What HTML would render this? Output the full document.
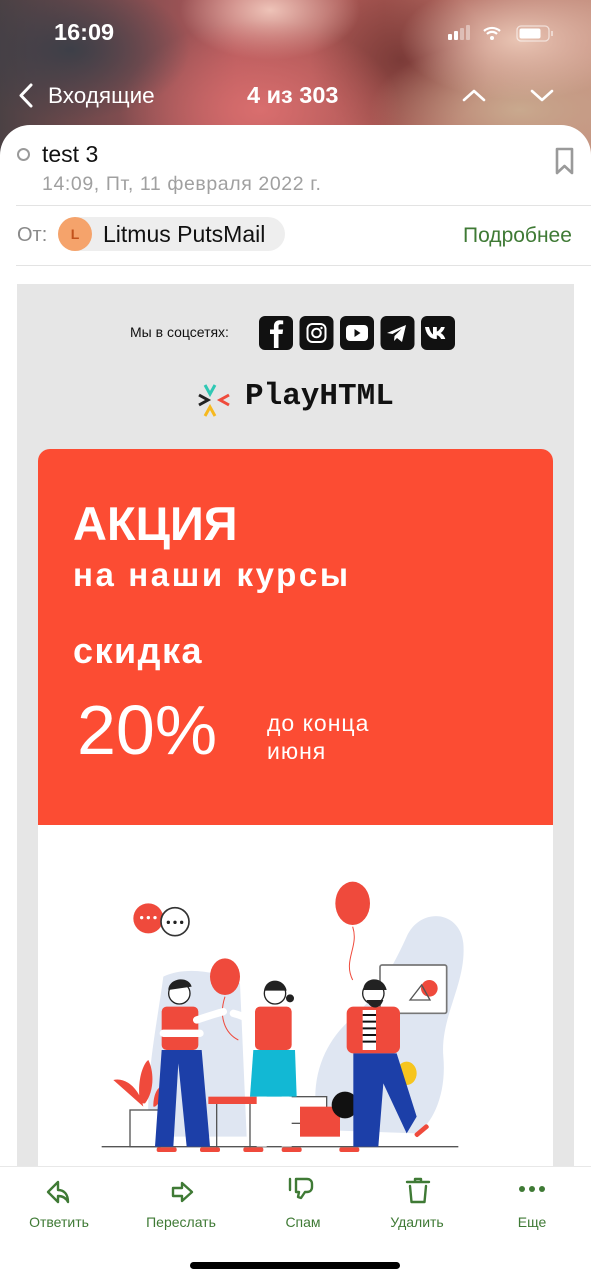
<!DOCTYPE html>
<html><head><meta charset="utf-8"><style>
*{margin:0;padding:0;box-sizing:border-box}
body{width:591px;height:1280px;position:relative;overflow:hidden;font-family:"Liberation Sans","DejaVu Sans",sans-serif;background:#fff}
.a{position:absolute;white-space:nowrap}
.bg{left:0;top:0;width:591px;height:160px;background:
radial-gradient(ellipse 120px 70px at 70px 50px,#3d3f48 0%,rgba(61,63,72,0) 100%),
radial-gradient(ellipse 140px 90px at 260px 110px,#d96e6e 0%,rgba(217,110,110,0) 100%),
radial-gradient(ellipse 90px 50px at 270px 10px,#eec3b8 0%,rgba(238,195,184,0) 100%),
radial-gradient(ellipse 120px 60px at 520px 40px,#e9c5b4 0%,rgba(233,197,180,0) 100%),
radial-gradient(ellipse 150px 70px at 520px 110px,#c9a98e 0%,rgba(201,169,142,0) 100%),
radial-gradient(ellipse 90px 80px at 400px 60px,#7b3b38 0%,rgba(123,59,56,0) 100%),
linear-gradient(90deg,#4b4144,#b2585a 40%,#a65651 65%,#c38d7d)}
.card{left:0;top:125px;width:591px;height:1155px;background:#fff;border-radius:30px 30px 0 0}
.w{color:#fff}
.ic{fill:none;stroke:#3f7a35;stroke-width:2.4;stroke-linecap:round;stroke-linejoin:round}
.tb{font-size:14px;color:#3f7a35;text-align:center;width:100px}
</style></head><body>
<div class="a bg"></div>
<div class="a w" style="left:54px;top:19px;font-size:23.5px;font-weight:bold">16:09</div>
<svg class="a" style="left:446px;top:24px" width="140" height="20">
<rect x="2" y="10" width="4" height="6" rx="1" fill="#fff"/><rect x="8" y="7" width="4" height="9" rx="1" fill="#fff"/><rect x="14" y="4" width="4" height="12" rx="1" fill="#fff" opacity=".4"/><rect x="20" y="1" width="4" height="15" rx="1" fill="#fff" opacity=".4"/>
<path d="M38 7a12 12 0 0 1 16 0M41 10a7 7 0 0 1 10 0" stroke="#fff" stroke-width="2.2" fill="none"/><circle cx="46" cy="14" r="2" fill="#fff"/>
<rect x="71" y="2" width="32" height="15" rx="4" fill="none" stroke="#fff" stroke-opacity=".6" stroke-width="1.3"/><rect x="73.5" y="4.5" width="21" height="10" rx="2" fill="#fff"/><rect x="105" y="7" width="2" height="5" fill="#fff" opacity=".5"/>
</svg>
<svg class="a" style="left:16px;top:82px" width="22" height="28"><path d="M15 3 5 13.5 15 24" stroke="#fff" stroke-width="3" fill="none" stroke-linecap="round" stroke-linejoin="round"/></svg>
<div class="a w" style="left:48px;top:83px;font-size:22.5px">Входящие</div>
<div class="a w" style="left:247px;top:82px;font-size:23.5px;font-weight:bold">4 из 303</div>
<svg class="a" style="left:462px;top:86px" width="100" height="20"><path d="M2 14 12 5 22 14M70 5 80 14 90 5" stroke="#fff" stroke-width="2.6" fill="none" stroke-linecap="round" stroke-linejoin="round"/></svg>

<div class="a card"></div>
<div class="a" style="left:17px;top:148px;width:13px;height:13px;border:2.5px solid #9a9a9a;border-radius:50%"></div>
<div class="a" style="left:42px;top:141px;font-size:23px;color:#111">test 3</div>
<div class="a" style="left:42px;top:173px;font-size:19.5px;color:#a0a0a0;letter-spacing:.6px">14:09, Пт, 11 февраля 2022 г.</div>
<svg class="a" style="left:554px;top:146px" width="22" height="30"><path d="M3 3h15v24l-7.5-7-7.5 7z" fill="none" stroke="#9a9a9a" stroke-width="2.6" stroke-linejoin="round"/></svg>
<div class="a" style="left:16px;top:205px;width:575px;height:1px;background:#e3e3e3"></div>
<div class="a" style="left:17px;top:224px;font-size:20px;color:#8a8a8a">От:</div>
<div class="a" style="left:58px;top:217px;width:227px;height:34px;border-radius:17px;background:#eeeeee"></div>
<div class="a" style="left:58px;top:217px;width:34px;height:34px;border-radius:50%;background:#f5a36b;color:#c2521b;font-size:14px;text-align:center;line-height:34px;font-weight:bold">L</div>
<div class="a" style="left:103px;top:221px;font-size:23px;color:#111">Litmus PutsMail</div>
<div class="a" style="left:463px;top:224px;font-size:21px;color:#3f7a35">Подробнее</div>
<div class="a" style="left:16px;top:265px;width:575px;height:1px;background:#e3e3e3"></div>

<div class="a" style="left:17px;top:284px;width:557px;height:890px;background:#e6e6e6"></div>
<div class="a" style="left:130px;top:324px;font-size:14px;color:#111">Мы в соцсетях:</div>
<svg class="a" style="left:259px;top:316px" width="196" height="35">
<g fill="#111"><rect x="0" y="0" width="34" height="34" rx="6"/><rect x="40.5" y="0" width="34" height="34" rx="6"/><rect x="81" y="0" width="34" height="34" rx="6"/><rect x="121.5" y="0" width="34" height="34" rx="6"/><rect x="162" y="0" width="34" height="34" rx="6"/></g>
<path d="M19.5 32V18h4l.6-4.5h-4.6v-3c0-1.3.4-2.2 2.3-2.2h2.4V4.5a30 30 0 0 0-3.5-.2c-3.4 0-5.8 2.1-5.8 6v3.2h-3.9V18h3.9v14z" fill="#fff"/>
<rect x="48.5" y="8" width="18" height="18" rx="5" fill="none" stroke="#fff" stroke-width="2"/><circle cx="57.5" cy="17" r="4.3" fill="none" stroke="#fff" stroke-width="2"/><circle cx="62.5" cy="12" r="1.2" fill="#fff"/>
<rect x="87" y="9" width="22" height="16" rx="4" fill="#fff"/><path d="M95.5 13v8l6-4z" fill="#111"/>
<path d="M128 17l19-8-4 17-5-4-3 3 .5-5 7-7-9 5z" fill="#fff"/>
<path d="M166 11h4c.8 3.5 2.5 6.5 4 7.5V11h3.8v4.5c1.7-.3 3.4-2.5 4.2-4.5h3.8c-.7 2.8-2.6 5-4.2 6 1.6.8 3.8 2.8 4.7 6h-4.2c-.8-2-2.4-3.6-4.3-3.8V23h-.6c-5.5 0-10-4-11.2-12z" fill="#fff"/>
</svg>
<svg class="a" style="left:197px;top:383px" width="36" height="34">
<path d="M8 2l5 9 5-9" stroke="#2fc8b4" stroke-width="3" fill="none"/>
<path d="M2 12l9 5-9 5" stroke="#222" stroke-width="3" fill="none"/>
<path d="M32 12l-9 5 9 5" stroke="#ef4b3c" stroke-width="3" fill="none"/>
<path d="M8 33l5-9 5 9" stroke="#f6b91f" stroke-width="3" fill="none"/>
</svg>
<div class="a" style="left:245px;top:379px;font-family:'Liberation Mono',monospace;font-size:31px;font-weight:bold;color:#111">PlayHTML</div>

<div class="a" style="left:38px;top:449px;width:515px;height:376px;background:#fc4c33;border-radius:12px 12px 0 0"></div>
<div class="a w" style="left:73px;top:496px;font-size:47px;font-weight:bold">АКЦИЯ</div>
<div class="a w" style="left:73px;top:556px;font-size:33px;font-weight:bold;letter-spacing:2.6px">на наши курсы</div>
<div class="a w" style="left:73px;top:630px;font-size:36px;font-weight:bold;letter-spacing:1.5px">скидка</div>
<div class="a w" style="left:77px;top:690px;font-size:70px">20%</div>
<div class="a w" style="left:267px;top:709px;font-size:23px;line-height:28px;letter-spacing:1px">до конца<br>июня</div>
<div class="a" style="left:38px;top:825px;width:515px;height:345px;background:#fff"></div>

<svg class="a" style="left:90px;top:870px" width="380" height="290" viewBox="0 0 1140 870">
<path d="M690 780c-40-140 10-260 90-330 70-60 120-140 170-250 40-90 160-80 170 20 10 120-70 220-60 340 10 110-30 200-80 230z" fill="#dfe6f2"/>
<path d="M180 800c-20-150 20-330 40-480 60-30 160-20 230 20l20 460z" fill="#dfe6f2"/>
<path d="M35 830H1105" stroke="#555" stroke-width="4"/>
<circle cx="175" cy="145" r="45" fill="#ef4a3c"/><circle cx="255" cy="155" r="42" fill="#fff" stroke="#333" stroke-width="5"/>
<g fill="#fff"><circle cx="155" cy="143" r="5"/><circle cx="175" cy="143" r="5"/><circle cx="195" cy="143" r="5"/></g>
<g fill="#222"><circle cx="235" cy="157" r="5"/><circle cx="255" cy="157" r="5"/><circle cx="275" cy="157" r="5"/></g>
<ellipse cx="788" cy="100" rx="52" ry="65" fill="#ef4a3c"/><ellipse cx="405" cy="320" rx="45" ry="55" fill="#ef4a3c"/>
<path d="M788 170c20 60-30 100 0 160M405 380c-20 60 0 110 40 130" stroke="#ef4a3c" stroke-width="3" fill="none"/>
<rect x="870" y="285" width="200" height="145" rx="6" fill="#fff" stroke="#777" stroke-width="5"/><circle cx="1018" cy="355" r="25" fill="#ef4a3c"/><path d="M960 390l35-45 25 45z" fill="none" stroke="#555" stroke-width="4"/>
<path d="M70 630c40-10 80 30 90 80M150 700c-10-70 10-120 25-130 20 40 15 100-10 130M190 710c0-40 15-60 25-60 5 30-5 50-20 60" fill="#ef4a3c"/>
<rect x="120" y="720" width="90" height="110" fill="#fff" stroke="#555" stroke-width="4"/>
<rect x="355" y="680" width="150" height="22" fill="#ef4a3c"/><path d="M380 702v130M480 702v130" stroke="#555" stroke-width="4"/>
<rect x="600" y="680" width="110" height="80" fill="#fff" stroke="#555" stroke-width="4"/>
<rect x="630" y="710" width="120" height="90" fill="#ef4a3c"/><circle cx="765" cy="705" r="40" fill="#111"/>
<ellipse cx="950" cy="610" rx="30" ry="35" fill="#f6c51f"/>
<rect x="215" y="410" width="110" height="130" rx="15" fill="#ef4a3c"/><path d="M215 540h120l25 290h-70l-25-250-15 250h-55z" fill="#1c3fa8"/>
<circle cx="268" cy="370" r="32" fill="#fff" stroke="#222" stroke-width="4"/><path d="M235 360c0-35 60-45 70-10z" fill="#222"/>
<path d="M320 450c30-10 60-20 80-25" stroke="#fff" stroke-width="22" stroke-linecap="round"/><path d="M430 430c20 5 40 15 70 25" stroke="#fff" stroke-width="22" stroke-linecap="round"/>
<path d="M220 490h110" stroke="#fff" stroke-width="22" stroke-linecap="round"/><path d="M480 500h110" stroke="#fff" stroke-width="22" stroke-linecap="round"/>
<rect x="495" y="410" width="110" height="130" rx="15" fill="#ef4a3c"/><path d="M490 540h125l5 140H480z" fill="#12b8d4"/><path d="M515 680v150M590 680v150" stroke="#fff" stroke-width="30"/>
<circle cx="555" cy="370" r="32" fill="#fff" stroke="#222" stroke-width="4"/><path d="M522 362c5-40 60-40 68 0z" fill="#222"/><circle cx="600" cy="385" r="12" fill="#222"/>
<rect x="770" y="410" width="160" height="140" rx="20" fill="#ef4a3c"/><rect x="818" y="420" width="40" height="120" fill="#fff"/>
<g stroke="#111" stroke-width="6"><path d="M818 435h40M818 455h40M818 475h40M818 495h40M818 515h40"/></g>
<path d="M790 550h130l60 190-30 50-70-150-15 190h-75z" fill="#1c3fa8"/>
<circle cx="850" cy="370" r="32" fill="#fff" stroke="#222" stroke-width="4"/><path d="M820 360c0-40 60-45 70 0zM830 390c10 30 40 30 50 0z" fill="#222"/>
<g fill="#ef4a3c"><rect x="200" y="832" width="60" height="14" rx="6"/><rect x="330" y="832" width="60" height="14" rx="6"/><rect x="460" y="832" width="60" height="14" rx="6"/><rect x="575" y="832" width="60" height="14" rx="6"/><rect x="748" y="832" width="60" height="14" rx="6"/><rect x="970" y="775" width="50" height="14" rx="6" transform="rotate(-40 995 782)"/></g>
</svg>

<div class="a" style="left:0;top:1166px;width:591px;height:114px;background:#fff;border-top:1px solid #e8e8e8"></div>
<svg class="a" style="left:42px;top:1178px" width="36" height="30"><path class="ic" d="M16 4 6 14l10 10v-6c5 0 8 2 10 6 0-8-4-12-10-12z"/></svg>
<svg class="a" style="left:166px;top:1178px" width="36" height="30"><path class="ic" d="M16 5v5H7v8h9v5l10-9z"/></svg>
<svg class="a" style="left:286px;top:1176px" width="36" height="30"><path class="ic" d="M4 3v11M10 3h11c3 0 5 2 5 5v3c0 3-2 5-5 5h-2l-4 6-3-1 1-5h-3z"/></svg>
<svg class="a" style="left:402px;top:1176px" width="36" height="32"><path class="ic" d="M5 6h22M13 6V3h6v3M8 10l1.5 16h13L24 10"/></svg>
<svg class="a" style="left:518px;top:1185px" width="30" height="10"><g fill="#3f7a35"><circle cx="4" cy="4" r="3"/><circle cx="14" cy="4" r="3"/><circle cx="24" cy="4" r="3"/></g></svg>
<div class="a tb" style="left:9px;top:1214px">Ответить</div>
<div class="a tb" style="left:131px;top:1214px">Переслать</div>
<div class="a tb" style="left:253px;top:1214px">Спам</div>
<div class="a tb" style="left:367px;top:1214px">Удалить</div>
<div class="a tb" style="left:482px;top:1214px">Еще</div>
<div class="a" style="left:190px;top:1262px;width:210px;height:7px;border-radius:4px;background:#000"></div>
</body></html>
